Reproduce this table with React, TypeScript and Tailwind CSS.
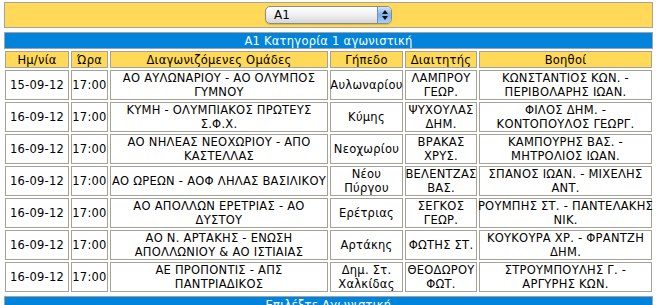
const rows: string[][][] = [
  [["15-09-12"], ["17:00"], ["ΑΟ ΑΥΛΩΝΑΡΙΟΥ - ΑΟ ΟΛΥΜΠΟΣ", "ΓΥΜΝΟΥ"], ["Αυλωναρίου"], ["ΛΑΜΠΡΟΥ", "ΓΕΩΡ."], ["ΚΩΝΣΤΑΝΤΙΟΣ ΚΩΝ. -", "ΠΕΡΙΒΟΛΑΡΗΣ ΙΩΑΝ."]],
  [["16-09-12"], ["17:00"], ["ΚΥΜΗ - ΟΛΥΜΠΙΑΚΟΣ ΠΡΩΤΕΥΣ", "Σ.Φ.Χ."], ["Κύμης"], ["ΨΥΧΟΥΛΑΣ", "ΔΗΜ."], ["ΦΙΛΟΣ ΔΗΜ. -", "ΚΟΝΤΟΠΟΥΛΟΣ ΓΕΩΡΓ."]],
  [["16-09-12"], ["17:00"], ["ΑΟ ΝΗΛΕΑΣ ΝΕΟΧΩΡΙΟΥ - ΑΠΟ", "ΚΑΣΤΕΛΛΑΣ"], ["Νεοχωρίου"], ["ΒΡΑΚΑΣ", "ΧΡΥΣ."], ["ΚΑΜΠΟΥΡΗΣ ΒΑΣ. -", "ΜΗΤΡΟΛΙΟΣ ΙΩΑΝ."]],
  [["16-09-12"], ["17:00"], ["ΑΟ ΩΡΕΩΝ - ΑΟΦ ΛΗΛΑΣ ΒΑΣΙΛΙΚΟΥ"], ["Νέου", "Πύργου"], ["ΒΕΛΕΝΤΖΑΣ", "ΒΑΣ."], ["ΣΠΑΝΟΣ ΙΩΑΝ. - ΜΙΧΕΛΗΣ", "ΑΝΤ."]],
  [["16-09-12"], ["17:00"], ["ΑΟ ΑΠΟΛΛΩΝ ΕΡΕΤΡΙΑΣ - ΑΟ", "ΔΥΣΤΟΥ"], ["Ερέτριας"], ["ΣΕΓΚΟΣ", "ΓΕΩΡ."], ["ΡΟΥΜΠΗΣ ΣΤ. - ΠΑΝΤΕΛΑΚΗΣ", "ΝΙΚ."]],
  [["16-09-12"], ["17:00"], ["ΑΟ Ν. ΑΡΤΑΚΗΣ - ΕΝΩΣΗ", "ΑΠΟΛΛΩΝΙΟΥ & ΑΟ ΙΣΤΙΑΙΑΣ"], ["Αρτάκης"], ["ΦΩΤΗΣ ΣΤ."], ["ΚΟΥΚΟΥΡΑ ΧΡ. - ΦΡΑΝΤΖΗ", "ΔΗΜ."]],
  [["16-09-12"], ["17:00"], ["ΑΕ ΠΡΟΠΟΝΤΙΣ - ΑΠΣ", "ΠΑΝΤΡΙΑΔΙΚΟΣ"], ["Δημ. Στ.", "Χαλκίδας"], ["ΘΕΟΔΩΡΟΥ", "ΦΩΤ."], ["ΣΤΡΟΥΜΠΟΥΛΗΣ Γ. -", "ΑΡΓΥΡΗΣ ΚΩΝ."]],
];

const heads = ["Ημ/νία", "Ώρα", "Διαγωνιζόμενες Ομάδες", "Γήπεδο", "Διαιτητής", "Βοηθοί"];

export default function App() {
  return (
    <div className="min-h-screen bg-white pt-[2px] pl-[4px] text-[11.5px] leading-[14px] tracking-[0.25px] text-black" style={{ fontFamily: '"DejaVu Sans", Verdana, sans-serif' }}>
      <div className="w-[649px]">
        <div className="flex h-[26px] items-center justify-center border border-[#a3a3a3] bg-[#ffd957]">
          <div className="flex h-[18px] w-[127px] items-center overflow-hidden rounded-[5px] border border-[#8a8a8a] bg-gradient-to-b from-white via-[#f0f0f0] to-[#d6d6d6] shadow-[0_1px_1px_rgba(0,0,0,0.15)]">
            <span className="flex-1 pl-[8px] text-[12px] tracking-normal">A1</span>
            <div className="flex h-full w-[14px] flex-col items-center justify-center gap-[2px] border-l border-[#6f8fc0] bg-gradient-to-b from-[#cfe2fb] via-[#7fb0ea] to-[#a9cdf7]">
              <svg width="6" height="4" viewBox="0 0 6 4"><path d="M3 0L6 4H0z" fill="#111" /></svg>
              <svg width="6" height="4" viewBox="0 0 6 4"><path d="M0 0H6L3 4z" fill="#111" /></svg>
            </div>
          </div>
        </div>

        <div className="mt-[4px] flex h-[17px] items-center justify-center border border-[#a3a3a3] bg-[#0084db] text-white">
          Α1 Κατηγορία 1 αγωνιστική
        </div>

        <div className="mt-[2px] ml-[1px] grid grid-cols-[64px_37px_218px_73px_72px_173px] gap-[2px]">
          {heads.map((h) => (
            <div key={h} className="flex h-[17px] items-center justify-center border border-[#a3a294] bg-[#ffd957]">
              {h}
            </div>
          ))}
          {rows.map((r, i) =>
            r.map((cell, j) => (
              <div key={i + "-" + j} className="flex h-[30px] flex-col items-center justify-center border border-[#a3a294] text-center whitespace-nowrap">
                {cell.map((line, k) => (
                  <span key={k}>{line}</span>
                ))}
              </div>
            ))
          )}
        </div>

        <div className="mt-[4px] flex h-[17px] items-center justify-center border border-[#a3a3a3] bg-[#0084db] text-white">
          Επιλέξτε Αγωνιστική
        </div>
      </div>
    </div>
  );
}
